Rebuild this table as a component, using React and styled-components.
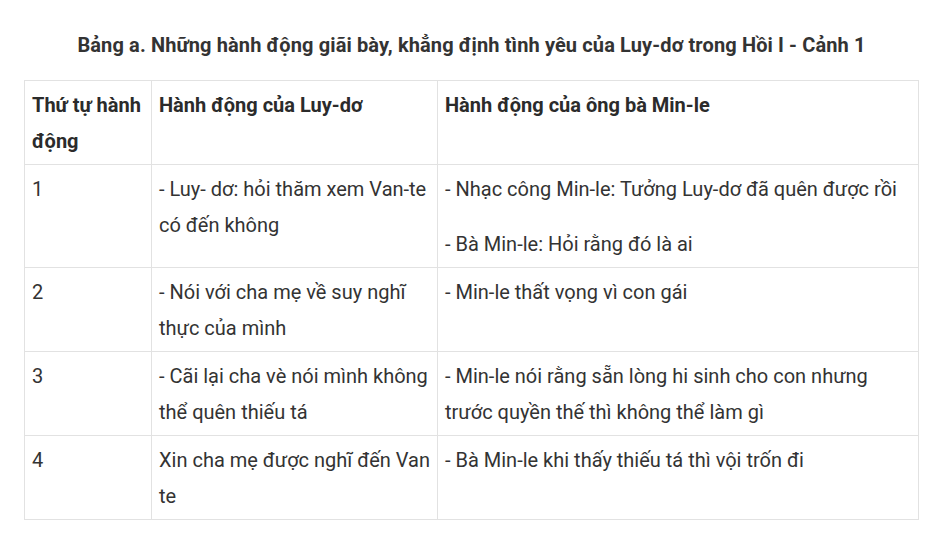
import React from "react";
import styled, { createGlobalStyle } from "styled-components";

const GlobalStyle = createGlobalStyle`
  html, body {
    margin: 0;
    padding: 0;
    background: #fff;
  }
  body {
    font-family: Roboto, "Liberation Sans", Arial, sans-serif;
    color: #333;
  }
`;

const Page = styled.div`
  width: 895px;
  padding: 27px 0 0 24px;
`;

const Title = styled.h3`
  margin: 0 0 17px;
  text-align: center;
  font-size: 20px;
  font-weight: 700;
  line-height: 36px;
  letter-spacing: 0.12px;
  color: #333;
`;

const Table = styled.table`
  width: 100%;
  border-collapse: collapse;
  table-layout: fixed;
  font-size: 20px;
  line-height: 36px;
`;

const Cell = styled.td`
  border: 1px solid #e2e2e2;
  padding: 6px 7px 5px;
  vertical-align: top;
  font-weight: ${(p) => (p.$head ? 700 : 400)};
  color: ${(p) => (p.$head ? "#2b2b2b" : "#333")};
`;

const Para = styled.p`
  margin: 0;
  & + & {
    margin-top: 19px;
  }
`;

const rows = [
  {
    no: "1",
    luy: ["- Luy- dơ: hỏi thăm xem Van-te có đến không"],
    min: [
      "- Nhạc công Min-le: Tưởng Luy-dơ đã quên được rồi",
      "- Bà Min-le: Hỏi rằng đó là ai",
    ],
  },
  {
    no: "2",
    luy: ["- Nói với cha mẹ về suy nghĩ thực của mình"],
    min: ["- Min-le thất vọng vì con gái"],
  },
  {
    no: "3",
    luy: ["- Cãi lại cha vè nói mình không thể quên thiếu tá"],
    min: [
      "- Min-le nói rằng sẵn lòng hi sinh cho con nhưng trước quyền thế thì không thể làm gì",
    ],
  },
  {
    no: "4",
    luy: ["Xin cha mẹ được nghĩ đến Van te"],
    min: ["- Bà Min-le khi thấy thiếu tá thì vội trốn đi"],
  },
];

export default function App() {
  return (
    <Page>
      <GlobalStyle />
      <Title>
        Bảng a. Những hành động giãi bày, khẳng định tình yêu của Luy-dơ trong Hồi I - Cảnh 1
      </Title>
      <Table>
        <colgroup>
          <col style={{ width: 127 }} />
          <col style={{ width: 286 }} />
          <col />
        </colgroup>
        <tbody>
          <tr>
            <Cell $head>Thứ tự hành động</Cell>
            <Cell $head>Hành động của Luy-dơ</Cell>
            <Cell $head>Hành động của ông bà Min-le</Cell>
          </tr>
          {rows.map((r) => (
            <tr key={r.no}>
              <Cell>{r.no}</Cell>
              <Cell>
                {r.luy.map((t) => (
                  <Para key={t}>{t}</Para>
                ))}
              </Cell>
              <Cell>
                {r.min.map((t) => (
                  <Para key={t}>{t}</Para>
                ))}
              </Cell>
            </tr>
          ))}
        </tbody>
      </Table>
    </Page>
  );
}
